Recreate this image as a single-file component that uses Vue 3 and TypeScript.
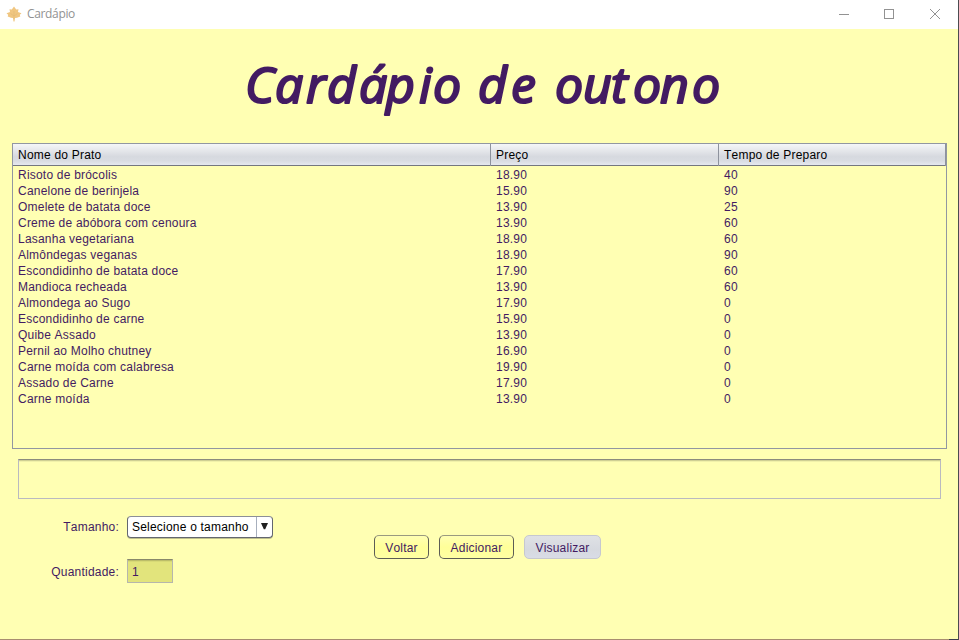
<script setup lang="ts">
interface Dish {
  name: string
  price: string
  time: number
}

const dishes: Dish[] = [
  { name: 'Risoto de brócolis', price: '18.90', time: 40 },
  { name: 'Canelone de berinjela', price: '15.90', time: 90 },
  { name: 'Omelete de batata doce', price: '13.90', time: 25 },
  { name: 'Creme de abóbora com cenoura', price: '13.90', time: 60 },
  { name: 'Lasanha vegetariana', price: '18.90', time: 60 },
  { name: 'Almôndegas veganas', price: '18.90', time: 90 },
  { name: 'Escondidinho de batata doce', price: '17.90', time: 60 },
  { name: 'Mandioca recheada', price: '13.90', time: 60 },
  { name: 'Almondega ao Sugo', price: '17.90', time: 0 },
  { name: 'Escondidinho de carne', price: '15.90', time: 0 },
  { name: 'Quibe Assado', price: '13.90', time: 0 },
  { name: 'Pernil ao Molho chutney', price: '16.90', time: 0 },
  { name: 'Carne moída com calabresa', price: '19.90', time: 0 },
  { name: 'Assado de Carne', price: '17.90', time: 0 },
  { name: 'Carne moída', price: '13.90', time: 0 },
]
</script>

<template>
  <div class="window">
    <header class="titlebar">
      <svg class="leaf" width="16" height="16" viewBox="0 0 16 16">
        <path d="M8 .5 10.200 3.500 12.500 3.300 12 6 15.500 7.300 13.800 8.800 14.300 10.500 11 11.800 9 12 8.500 15.500h-1L7 12l-2-.2-3.300-1.300.5-1.700L.5 7.300 4 6 3.500 3.300l2.300.2z" fill="#f0c680" />
        <path d="M8 5v8M4.500 7.500 8 10l3.500-2.500" fill="none" stroke="#e3b874" stroke-width=".6" />
      </svg>
      <span class="caption">Cardápio</span>
      <svg class="controls" width="104" height="12" viewBox="0 0 104 12" fill="none" stroke="#929292">
        <path d="M0 6.500h10" />
        <rect x="45.500" y="1.500" width="9" height="9" />
        <path d="m91 1 10 10M101 1 91 11" />
      </svg>
    </header>

    <main class="content">
      <h1 class="heading">
        <svg width="490" height="92" viewBox="0 -11 490 92">
          <text y="50.500" x="3 33 64 85 117 144 177 191">Cardápio</text>
          <text y="50.500" x="236 269">de</text>
          <text y="50.500" x="313 341 369 391 418 450">outono</text>
        </svg>
      </h1>

      <section class="table">
        <div class="row head">
          <div>Nome do Prato</div>
          <div>Preço</div>
          <div>Tempo de Preparo</div>
        </div>
        <div class="rows">
          <div v-for="dish in dishes" :key="dish.name" class="row">
            <div>{{ dish.name }}</div>
            <div>{{ dish.price }}</div>
            <div>{{ dish.time }}</div>
          </div>
        </div>
      </section>

      <div class="details"></div>

      <section class="form">
        <div class="fields">
          <span class="label">Tamanho:</span>
          <div class="select">
            <span class="value">Selecione o tamanho</span>
            <span class="arrow"><svg width="7" height="7" viewBox="0 0 7 7"><path d="M0 0h7L4.200 6.200H2.800z" fill="#202020" /></svg></span>
          </div>
          <span class="label lower">Quantidade:</span>
          <div class="quantity">1</div>
        </div>
        <div class="actions">
          <button class="btn">Voltar</button>
          <button class="btn wide">Adicionar</button>
          <button class="btn view">Visualizar</button>
        </div>
      </section>
    </main>
    <footer class="edge"></footer>
  </div>
</template>

<style>
body {
  margin: 0;
  overflow: hidden;
}
</style>

<style scoped>
.window {
  box-sizing: border-box;
  width: 959px;
  height: 640px;
  display: flex;
  flex-direction: column;
  border-right: 1px solid #4c4c50;
  background: #ffffb3;
  color: #431b62;
  font: 12px/16px "Liberation Sans", Arial, sans-serif;
  font-kerning: none;
  letter-spacing: 0.21px;
}
.titlebar {
  height: 29px;
  flex: none;
  box-sizing: border-box;
  display: flex;
  align-items: center;
  padding: 0 14px 2px 6px;
  background: #fff;
}
.caption {
  margin: 1px auto 0 5px;
  color: #929292;
  font-family: "Open Sans", sans-serif;
  letter-spacing: -0.35px;
}
.controls {
  margin-right: 1px;
}
.content {
  flex: 1;
  display: flex;
  flex-direction: column;
}
.heading {
  height: 92px;
  margin: 12px 0 10px 242px;
}
.heading svg {
  display: block;
}
.heading text {
  font: italic 400 50px "Open Sans", sans-serif;
  letter-spacing: 0;
  fill: #431b62;
  stroke: #431b62;
  stroke-width: 2.2px;
  stroke-linecap: round;
  stroke-linejoin: round;
}
.table {
  box-sizing: border-box;
  width: 935px;
  height: 306px;
  margin-left: 12px;
  border: 1px solid #9297a1;
}
.row {
  display: grid;
  grid-template-columns: 478px 228px 227px;
  height: 16px;
}
.row > div {
  padding-left: 5px;
  white-space: nowrap;
}
.head {
  height: 22px;
  box-sizing: border-box;
  border-bottom: 1px solid #74777f;
  background: linear-gradient(#f5f6f8 0, #e3e5e9 35%, #d6d9df 60%, #d9dce2 80%, #e5e8ef 100%);
  color: #000;
  line-height: 22px;
}
.head > div {
  border-right: 1px solid #8d929d;
}
.rows {
  padding-top: 1px;
}
.details {
  box-sizing: border-box;
  width: 923px;
  height: 40px;
  margin: 10px 0 0 18px;
  border: 1px solid #babac0;
  border-top-color: #8b8b7e;
  box-shadow: inset 0 1px #cfcf94, inset 0 2px #f1f1aa;
}
.form {
  display: flex;
  padding-top: 16px;
}
.fields {
  width: 374px;
  display: grid;
  grid-template-columns: 119px 146px;
  grid-template-rows: 23px 24px;
  gap: 21px 8px;
  align-items: center;
}
.label {
  text-align: right;
}
.lower {
  padding-top: 2px;
}
.select {
  box-sizing: border-box;
  height: 22px;
  display: flex;
  border: 1px solid #63666f;
  border-top-color: #8c8f98;
  border-radius: 4px;
  background: #fff;
  color: #000;
  line-height: 20px;
  box-shadow: 0 1px #bfc08f;
}
.value {
  flex: 1;
  padding-left: 4px;
  white-space: nowrap;
}
.arrow {
  width: 15px;
  flex: none;
  display: flex;
  align-items: center;
  justify-content: center;
  border-left: 1px solid #a7afbd;
}
.arrow svg {
  margin-bottom: 1px;
}
.quantity {
  box-sizing: border-box;
  width: 46px;
  height: 24px;
  padding-left: 4px;
  border: 1px solid #b6b6ad;
  border-top-color: #88886b;
  background: #e2e47c;
  box-shadow: inset 0 1px #bcbd69, inset 0 2px #d7d976;
  line-height: 24px;
}
.actions {
  display: flex;
  gap: 10px;
  padding-top: 20px;
}
.btn {
  box-sizing: border-box;
  width: 55px;
  height: 24px;
  padding: 1px 0 0;
  border: 1px solid #5c5c55;
  border-top-color: #9a9a80;
  border-radius: 5px;
  background: linear-gradient(#ffffb3, #ffff99 50%, #ffffa3);
  color: inherit;
  font: inherit;
  font-kerning: none;
  letter-spacing: inherit;
}
.wide {
  width: 75px;
}
.view {
  width: 77px;
  border-color: #c6c8d0;
  background: linear-gradient(#dfe1e5, #d6d9df 60%, #d9dce6);
}
.edge {
  height: 1px;
  margin-top: auto;
  flex: none;
  background: linear-gradient(to right, #a88d70 949px, #3c3e4d 949px);
}
</style>
